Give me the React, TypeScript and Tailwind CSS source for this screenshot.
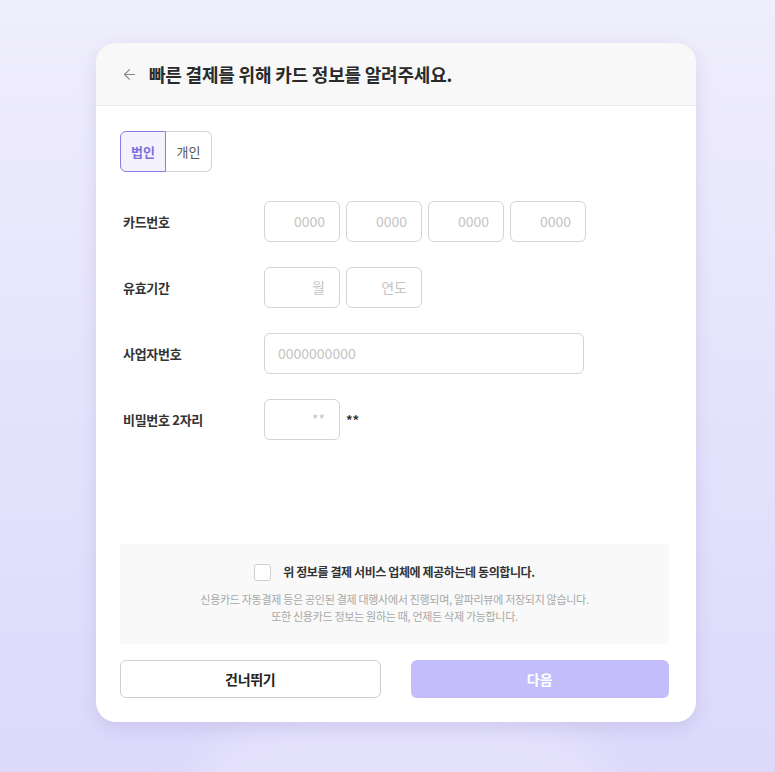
import { ArrowLeft } from 'lucide-react';

const font = { fontFamily: '"Noto Sans CJK KR", "Noto Sans", sans-serif' };

function Row({ label, children }: { label: string; children: React.ReactNode }) {
  return (
    <div className="flex items-center h-[41px]">
      <div className="w-[144px] pl-[3px] text-[13px] font-bold text-[#333] tracking-[-0.3px]">{label}</div>
      <div className="flex items-center gap-[6px]">{children}</div>
    </div>
  );
}

function Box({ ph, wide }: { ph: string; wide?: boolean }) {
  return (
    <div
      className={
        wide
          ? 'w-[320px] h-[41px] rounded-[6px] border border-[#d4d4d4] flex items-center px-[13px] text-[14px] text-[#c4c4c4]'
          : 'w-[76px] h-[41px] rounded-[6px] border border-[#d4d4d4] flex items-center justify-end pr-[14px] text-[14px] text-[#c4c4c4]'
      }
    >
      {ph}
    </div>
  );
}

export default function App() {
  return (
    <div
      className="relative min-h-[772px] w-full overflow-hidden bg-gradient-to-b from-[#efeefc] to-[#dcd9fb]"
      style={font}
    >
      <div className="absolute left-[404px] -translate-x-1/2 top-[715px] w-[460px] h-[260px] rounded-full bg-[#e4e1fc] blur-[18px]" />
      <div className="relative pt-[43px] pl-[17px] flex justify-center">
        <div className="w-[600px] h-[679px] bg-white rounded-[20px] shadow-[0_6px_18px_rgba(120,110,180,0.18)] flex flex-col overflow-hidden">
          <div className="h-[63px] bg-[#f8f8f8] border-b border-[#ececec] flex items-center pl-[25px] gap-[11px]">
            <ArrowLeft size={17} strokeWidth={1.6} className="text-[#888]" />
            <span className="text-[18px] font-bold text-[#2a2a2a] tracking-[-0.2px]">빠른 결제를 위해 카드 정보를 알려주세요.</span>
          </div>
          <div className="flex-1 flex flex-col pl-[24px] pr-[27px] pb-[24px]">
            <div className="mt-[25px] flex w-[92px] h-[41px]">
              <div className="w-[46px] rounded-l-[6px] border border-[#8a7fe0] bg-[#f4f2fe] flex items-center justify-center text-[13px] font-bold text-[#7d70dc]">
                법인
              </div>
              <div className="w-[46px] rounded-r-[6px] border border-l-0 border-[#d4d4d4] flex items-center justify-center text-[13px] text-[#555]">
                개인
              </div>
            </div>
            <div className="mt-[29px] flex flex-col gap-[25px]">
              <Row label="카드번호">
                <Box ph="0000" />
                <Box ph="0000" />
                <Box ph="0000" />
                <Box ph="0000" />
              </Row>
              <Row label="유효기간">
                <Box ph="월" />
                <Box ph="연도" />
              </Row>
              <Row label="사업자번호">
                <Box ph="0000000000" wide />
              </Row>
              <Row label="비밀번호 2자리">
                <Box ph="**" />
                <span className="text-[13px] font-bold text-[#333]">**</span>
              </Row>
            </div>
            <div className="mt-auto bg-[#f9f9f9] h-[100px] flex flex-col items-center pt-[19px]">
              <div className="flex items-center gap-[12px]">
                <div className="w-[17px] h-[17px] rounded-[3px] border border-[#cfcfcf] bg-white" />
                <span className="text-[12px] font-bold text-[#333] tracking-[-0.4px]">위 정보를 결제 서비스 업체에 제공하는데 동의합니다.</span>
              </div>
              <div className="mt-[10px] text-[11px] leading-[17px] text-[#a8a8a8] text-center tracking-[-0.3px]">
                <div>신용카드 자동결제 등은 공인된 결제 대행사에서 진행되며, 알파리뷰에 저장되지 않습니다.</div>
                <div>또한 신용카드 정보는 원하는 때, 언제든 삭제 가능합니다.</div>
              </div>
            </div>
            <div className="mt-[16px] flex gap-[30px]">
              <button className="flex-1 h-[38px] rounded-[6px] border border-[#cfcfcf] bg-white text-[14px] font-bold text-[#222] tracking-[-0.3px]">
                건너뛰기
              </button>
              <button className="flex-1 h-[38px] rounded-[6px] bg-[#c4bdfb] text-[14px] font-bold text-white">
                다음
              </button>
            </div>
          </div>
        </div>
      </div>
    </div>
  );
}
